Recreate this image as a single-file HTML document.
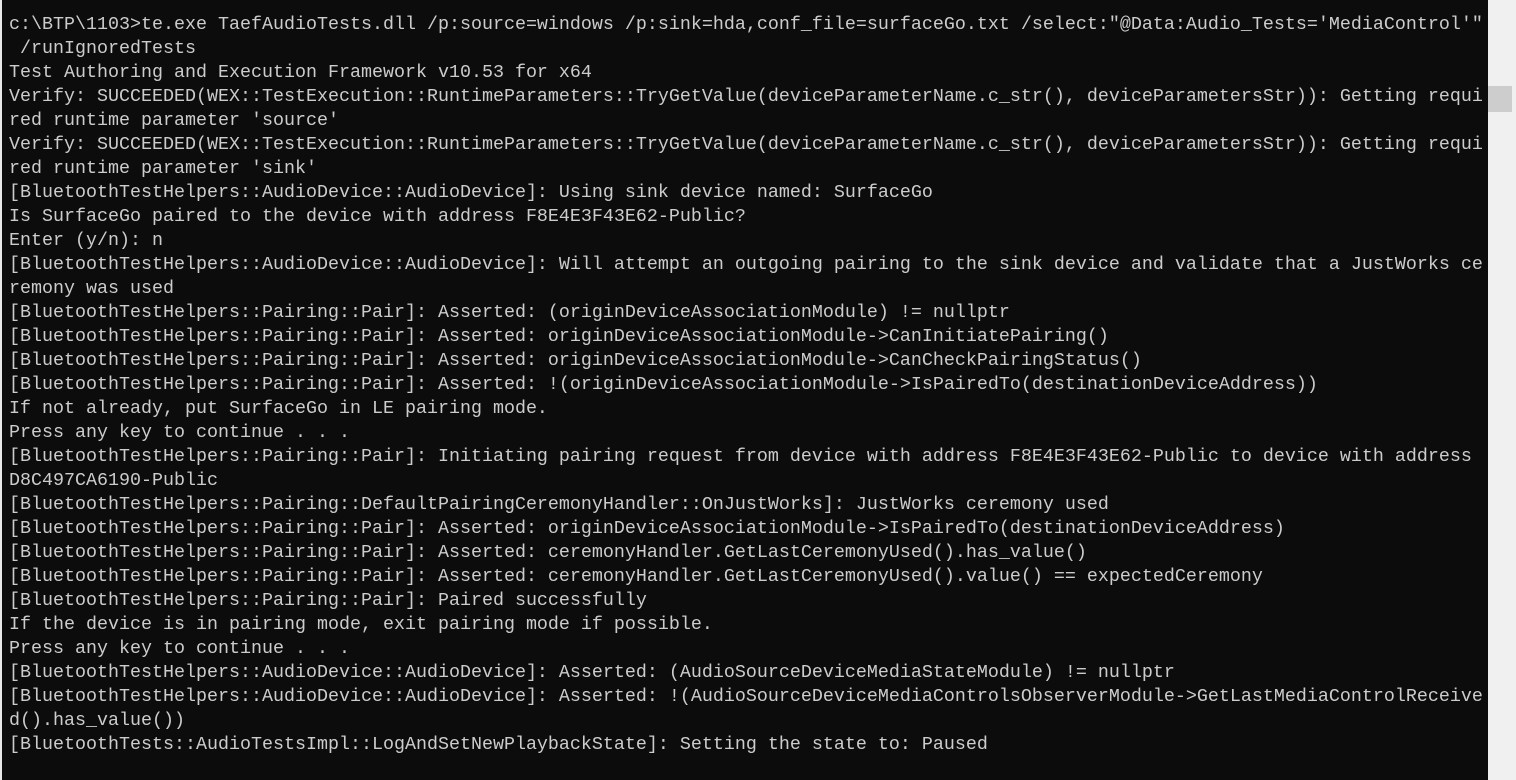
<!DOCTYPE html>
<html><head><meta charset="utf-8"><style>
html,body{margin:0;padding:0;width:1516px;height:780px;overflow:hidden;background:#0c0c0c}
.l{position:absolute;left:0;top:0;width:2px;height:780px;background:#e8e8e8}
pre{position:absolute;left:9px;top:13px;margin:0;font-family:"Liberation Mono",monospace;font-size:18.33px;line-height:24px;color:#cccccc;white-space:pre}
.sb{position:absolute;left:1488px;top:0;width:28px;height:780px;background:#f0f0f0}
.th{position:absolute;left:1488px;top:86px;width:24px;height:26px;background:#cdcdcd}
</style></head><body>
<div class="l"></div>
<pre>c:\BTP\1103&gt;te.exe TaefAudioTests.dll /p:source=windows /p:sink=hda,conf_file=surfaceGo.txt /select:"@Data:Audio_Tests='MediaControl'"
 /runIgnoredTests
Test Authoring and Execution Framework v10.53 for x64
Verify: SUCCEEDED(WEX::TestExecution::RuntimeParameters::TryGetValue(deviceParameterName.c_str(), deviceParametersStr)): Getting requi
red runtime parameter 'source'
Verify: SUCCEEDED(WEX::TestExecution::RuntimeParameters::TryGetValue(deviceParameterName.c_str(), deviceParametersStr)): Getting requi
red runtime parameter 'sink'
[BluetoothTestHelpers::AudioDevice::AudioDevice]: Using sink device named: SurfaceGo
Is SurfaceGo paired to the device with address F8E4E3F43E62-Public?
Enter (y/n): n
[BluetoothTestHelpers::AudioDevice::AudioDevice]: Will attempt an outgoing pairing to the sink device and validate that a JustWorks ce
remony was used
[BluetoothTestHelpers::Pairing::Pair]: Asserted: (originDeviceAssociationModule) != nullptr
[BluetoothTestHelpers::Pairing::Pair]: Asserted: originDeviceAssociationModule-&gt;CanInitiatePairing()
[BluetoothTestHelpers::Pairing::Pair]: Asserted: originDeviceAssociationModule-&gt;CanCheckPairingStatus()
[BluetoothTestHelpers::Pairing::Pair]: Asserted: !(originDeviceAssociationModule-&gt;IsPairedTo(destinationDeviceAddress))
If not already, put SurfaceGo in LE pairing mode.
Press any key to continue . . .
[BluetoothTestHelpers::Pairing::Pair]: Initiating pairing request from device with address F8E4E3F43E62-Public to device with address
D8C497CA6190-Public
[BluetoothTestHelpers::Pairing::DefaultPairingCeremonyHandler::OnJustWorks]: JustWorks ceremony used
[BluetoothTestHelpers::Pairing::Pair]: Asserted: originDeviceAssociationModule-&gt;IsPairedTo(destinationDeviceAddress)
[BluetoothTestHelpers::Pairing::Pair]: Asserted: ceremonyHandler.GetLastCeremonyUsed().has_value()
[BluetoothTestHelpers::Pairing::Pair]: Asserted: ceremonyHandler.GetLastCeremonyUsed().value() == expectedCeremony
[BluetoothTestHelpers::Pairing::Pair]: Paired successfully
If the device is in pairing mode, exit pairing mode if possible.
Press any key to continue . . .
[BluetoothTestHelpers::AudioDevice::AudioDevice]: Asserted: (AudioSourceDeviceMediaStateModule) != nullptr
[BluetoothTestHelpers::AudioDevice::AudioDevice]: Asserted: !(AudioSourceDeviceMediaControlsObserverModule-&gt;GetLastMediaControlReceive
d().has_value())
[BluetoothTests::AudioTestsImpl::LogAndSetNewPlaybackState]: Setting the state to: Paused</pre>
<div class="sb"></div><div class="th"></div>
</body></html>
